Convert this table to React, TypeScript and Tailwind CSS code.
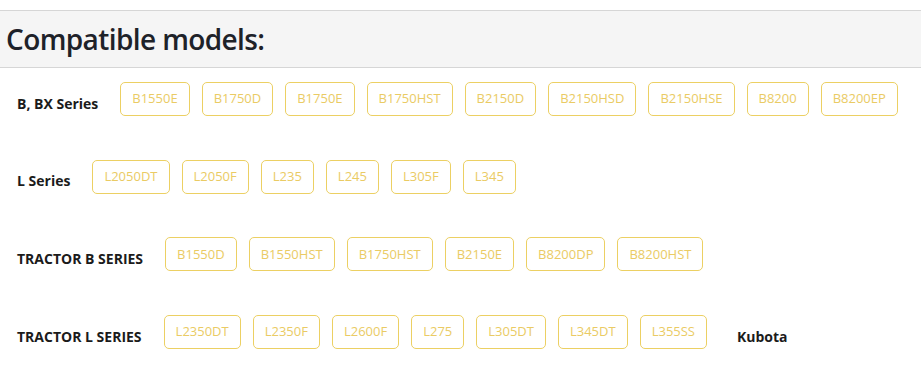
const series: { name: string; models: string[]; brand?: string }[] = [
  {
    name: 'B, BX Series',
    models: ['B1550E', 'B1750D', 'B1750E', 'B1750HST', 'B2150D', 'B2150HSD', 'B2150HSE', 'B8200', 'B8200EP'],
  },
  { name: 'L Series', models: ['L2050DT', 'L2050F', 'L235', 'L245', 'L305F', 'L345'] },
  { name: 'TRACTOR B SERIES', models: ['B1550D', 'B1550HST', 'B1750HST', 'B2150E', 'B8200DP', 'B8200HST'] },
  {
    name: 'TRACTOR L SERIES',
    models: ['L2350DT', 'L2350F', 'L2600F', 'L275', 'L305DT', 'L345DT', 'L355SS'],
    brand: 'Kubota',
  },
];

export default function App() {
  return (
    <div className="w-[921px] h-[368px] bg-white pt-[10px] overflow-hidden" style={{ fontFamily: '"Open Sans", "Liberation Sans", sans-serif' }}>
      <div className="h-[58px] flex items-center border-y border-[#d6d6d6] bg-[#f5f5f5] px-[6px]">
        <h2 className="text-[28px] font-semibold text-[#1e2229] tracking-[-0.6px]">Compatible models:</h2>
      </div>

      <div className="flex flex-col gap-[43.7px] pt-[14px] pl-[17px]">
        {series.map(s => (
          <div key={s.name} className="flex items-center">
            <span className="pt-[8px] mr-[22px] text-[14px] font-bold text-[#1b1b1b] whitespace-nowrap">{s.name}</span>
            <div className="flex gap-3">
              {s.models.map(m => (
                <button
                  key={m}
                  className="h-[34px] px-[11px] rounded-[5px] border border-[#ecd063] text-[13px] text-[#eacb64] bg-white whitespace-nowrap"
                >
                  {m}
                </button>
              ))}
            </div>
            {s.brand && (
              <span className="pt-[8px] ml-[30px] text-[14px] font-bold text-[#1b1b1b]">{s.brand}</span>
            )}
          </div>
        ))}
      </div>
    </div>
  );
}
